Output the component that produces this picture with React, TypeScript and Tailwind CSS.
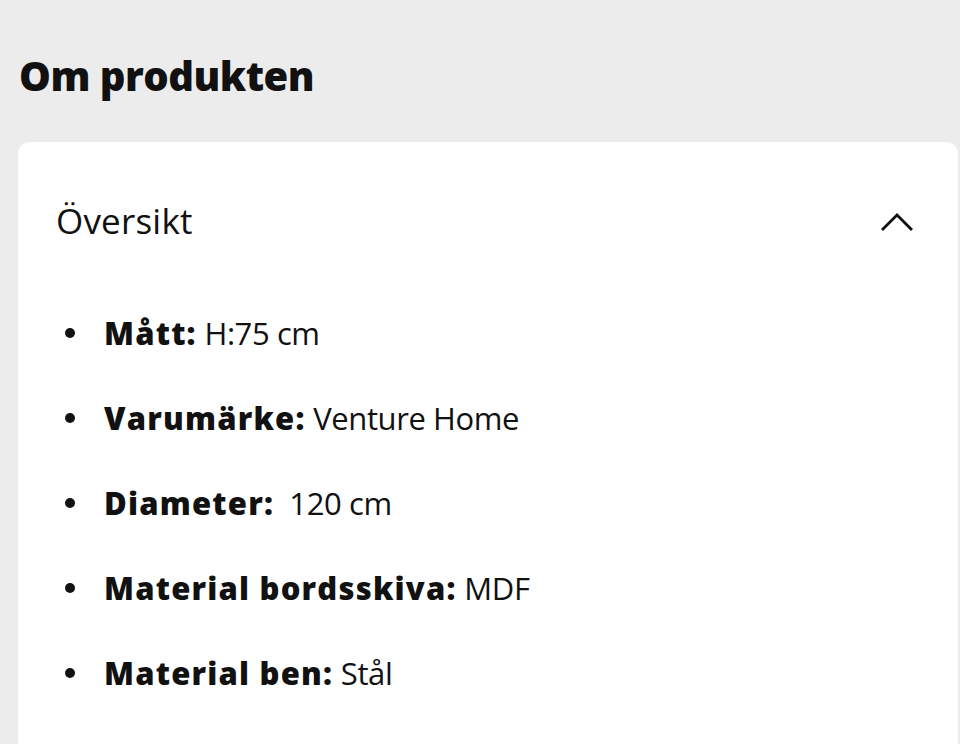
const specs = [
  { label: "Mått:", value: "H:75 cm" },
  { label: "Varumärke:", value: "Venture Home" },
  { label: "Diameter:", value: " 120 cm" },
  { label: "Material bordsskiva:", value: "MDF" },
  { label: "Material ben:", value: "Stål" },
];

export default function App() {
  return (
    <div
      className="h-[744px] w-[960px] overflow-hidden bg-[#ececec] text-[#111]"
      style={{ fontFamily: "'Open Sans', Lato, sans-serif" }}
    >
      <h1 className="pl-[19px] pt-[48px] text-[40px] font-extrabold leading-[56px] tracking-[-0.5px]">
        Om produkten
      </h1>

      <section className="ml-[18px] mr-[2px] mt-[38px] h-[700px] rounded-t-[12px] bg-white">
        {/* header */}
        <div className="flex items-center justify-between pl-[38px] pr-[45px] pt-[55px]">
          <h2 className="text-[35px] leading-[48px] tracking-[0.2px]">Översikt</h2>
          <svg width="32" height="20" viewBox="0 0 32 20" fill="none" className="text-[#111]">
            <polyline
              points="2,18 16,4 30,18"
              stroke="currentColor"
              strokeWidth="2.8"
              strokeLinecap="square"
            />
          </svg>
        </div>

        {/* specs list */}
        <ul className="mt-[66px] flex flex-col gap-[41px] pl-[47px]">
          {specs.map((s) => (
            <li key={s.label} className="flex items-center text-[31px] leading-[44px]">
              <span className="mr-[29px] h-[10px] w-[10px] rounded-full bg-[#111]" />
              <span className="font-extrabold tracking-[1.2px]">{s.label}</span>
              <span className="whitespace-pre tracking-[-0.4px]"> {s.value}</span>
            </li>
          ))}
        </ul>
      </section>
    </div>
  );
}
